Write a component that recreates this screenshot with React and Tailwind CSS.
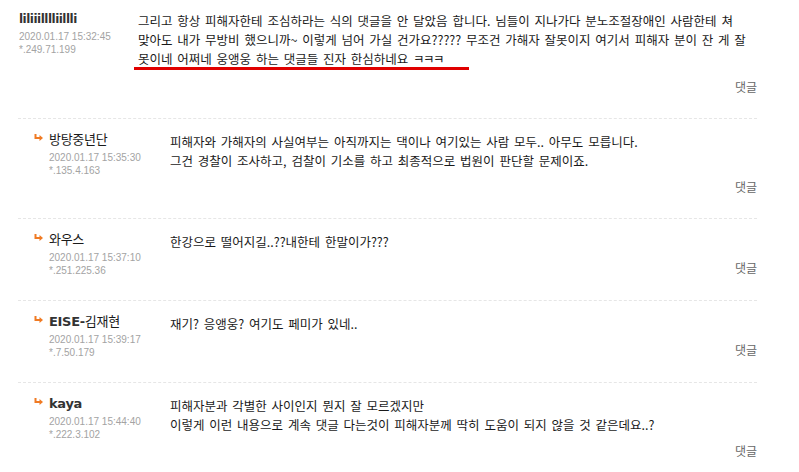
import React from "react";

const comments = [
  {
    name: "방탕중년단",
    date: "2020.01.17 15:35:30",
    ip: "*.135.4.163",
    lines: [
      "피해자와 가해자의 사실여부는 아직까지는 댁이나 여기있는 사람 모두.. 아무도 모릅니다.",
      "그건 경찰이 조사하고, 검찰이 기소를 하고 최종적으로 법원이 판단할 문제이죠.",
    ],
  },
  {
    name: "와우스",
    date: "2020.01.17 15:37:10",
    ip: "*.251.225.36",
    lines: ["한강으로 떨어지길..??내한테 한말이가???"],
  },
  {
    name: "EISE-김재현",
    date: "2020.01.17 15:39:17",
    ip: "*.7.50.179",
    lines: ["재기? 응앵웅? 여기도 페미가 있네.."],
  },
  {
    name: "kaya",
    date: "2020.01.17 15:44:40",
    ip: "*.222.3.102",
    lines: [
      "피해자분과 각별한 사이인지 뭔지 잘 모르겠지만",
      "이렇게 이런 내용으로 계속 댓글 다는것이 피해자분께 딱히 도움이 되지 않을 것 같은데요..?",
    ],
  },
];

const NameText = ({ text }) => {
  const parts = text.split(/([\uAC00-\uD7A3]+)/).filter(Boolean);
  return parts.map((p, i) =>
    /[\uAC00-\uD7A3]/.test(p) ? (
      <span key={i} className="font-normal text-[#1a1a1a]">{p}</span>
    ) : (
      <span key={i} className="font-bold">{p}</span>
    )
  );
};

const ReplyArrow = () => (
  <svg width="10" height="8" viewBox="0 0 10 8" className="shrink-0 mt-[2px]">
    <path d="M1.5 0 V4 H6" stroke="#f07a23" strokeWidth="2" fill="none" />
    <polygon points="5.5,1 9,4 5.5,7" fill="#f07a23" />
  </svg>
);

const Meta = ({ date, ip }) => (
  <div className="mt-[3px] text-[10px] leading-[13px] text-[#a3a3a3] font-['Liberation_Sans',sans-serif]">
    <div>{date}</div>
    <div>{ip}</div>
  </div>
);

const ReplyBtn = () => (
  <div className="mt-[9px] text-right text-[12px] leading-[16px] text-[#666]">댓글</div>
);

const App = () => {
  return (
    <div className="w-[799px] h-[472px] bg-white overflow-hidden font-['Noto_Sans_CJK_KR',sans-serif]">
      <div className="ml-[18px] w-[739px]">
        {/* main comment */}
        <div className="flex border-b border-dashed border-[#e6e6e6] pt-[11px] pb-[23px]">
          <div className="w-[120px] pl-[1px] shrink-0">
            <div className="text-[12px] leading-[16px] font-bold text-[#333] font-['DejaVu_Sans','Noto_Sans_CJK_KR',sans-serif] tracking-[-0.5px]">
              liliiilllliillli
            </div>
            <Meta date="2020.01.17 15:32:45" ip="*.249.71.199" />
          </div>
          <div className="flex-1">
            <div className="text-[12.5px] leading-[19px] text-[#1a1a1a] whitespace-nowrap [word-spacing:2px]">
              그리고 항상 피해자한테 조심하라는 식의 댓글을 안 달았음 합니다. 님들이 지나가다 분노조절장애인 사람한테 쳐
              <br />
              맞아도 내가 무방비 했으니까~ 이렇게 넘어 가실 건가요????? 무조건 가해자 잘못이지 여기서 피해자 분이 잔 게 잘
              <br />
              못이네 어쩌네 웅앵웅 하는 댓글들 진자 한심하네요 <span className="tracking-[-1.5px]">ㅋㅋㅋ</span>
            </div>
            <div className="-mt-[1px] -ml-[4px] h-[3px] w-[335px] bg-[#e00000]" />
            <ReplyBtn />
          </div>
        </div>

        {/* replies */}
        {comments.map((c, i) => (
          <div
            key={i}
            className="flex border-b border-dashed border-[#e6e6e6] pt-[13px] pb-[23px]"
          >
            <div className="w-[152px] shrink-0 flex pl-[16px]">
              <ReplyArrow />
              <div className="ml-[5px]">
                <div className="text-[13px] leading-[16px] text-[#333] font-['DejaVu_Sans','Noto_Sans_CJK_KR',sans-serif] tracking-[-0.3px]">
                  <NameText text={c.name} />
                </div>
                <Meta date={c.date} ip={c.ip} />
              </div>
            </div>
            <div className="flex-1">
              <div className="text-[12.5px] leading-[19px] text-[#1a1a1a] whitespace-nowrap [word-spacing:2px]">
                {c.lines.map((l, j) => (
                  <div key={j}>{l}</div>
                ))}
              </div>
              <ReplyBtn />
            </div>
          </div>
        ))}
      </div>
    </div>
  );
};

export default App;
